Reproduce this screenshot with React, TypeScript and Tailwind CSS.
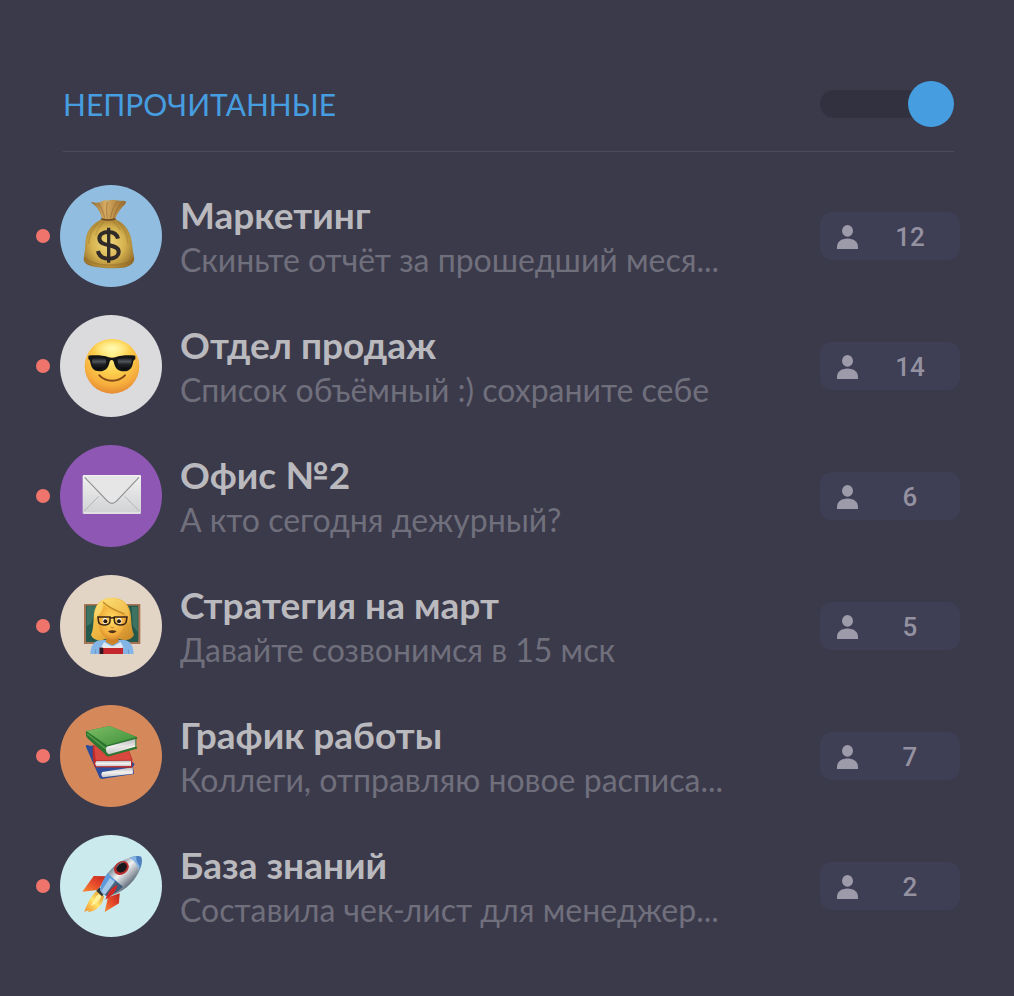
import { useState } from "react";
import type { ReactNode } from "react";

function MoneyBag() {
  return (
    <svg viewBox="90 27 306 306" className="size-full" aria-hidden="true">
      <defs>
        <radialGradient id="bag" cx="0.48" cy="0.5" r="0.6">
          <stop offset="0" stopColor="#efd87c" />
          <stop offset="0.55" stopColor="#d6b350" />
          <stop offset="1" stopColor="#946c28" />
        </radialGradient>
        <linearGradient id="bagNeck" x1="0" x2="1" y1="0" y2="0">
          <stop offset="0" stopColor="#8f6a35" />
          <stop offset="0.4" stopColor="#d5ab62" />
          <stop offset="0.7" stopColor="#b98c45" />
          <stop offset="1" stopColor="#94692d" />
        </linearGradient>
      </defs>
      <path d="M187 78c10 4 18 1 27-1 6-4 13-5 20-3 8-4 17-3 24-1 9 2 17 1 26 2 5 1 5 4 2 8-14 15-27 31-31 48h-39c-3-20-14-39-30-49-3-2-2-5 1-4z" fill="url(#bagNeck)" />
      <path d="M205 82c10 14 17 30 19 46M232 78c-3 17-3 34 0 50M262 76c-13 17-18 34-20 52M276 79c-15 17-22 32-26 50" fill="none" stroke="#7d5727" strokeWidth="3" opacity="0.45" />
      <path d="M216 130h40c20 8 38 25 46 52 5 19 5 38 10 60 5 22-16 32-42 34-23 2-49 1-73-3-23-3-41-12-35-32 5-21 2-41 7-60 7-25 25-42 47-51z" fill="url(#bag)" />
      <path d="M206 142c-18 12-28 31-30 62M222 137c-13 12-22 26-25 42M264 138c18 17 28 38 30 65M248 136c12 8 19 17 23 27" fill="none" stroke="#8f6a26" strokeWidth="4" opacity="0.3" />
      <path d="M165 245c14 17 39 21 72 22 32 0 60-4 74-20" fill="none" stroke="#86611f" strokeWidth="5" opacity="0.35" />
      <path d="M215 129c13 4 27 4 40 0" fill="none" stroke="#68451d" strokeWidth="5" strokeLinecap="round" />
      <path d="M264 188c-3-13-14-20-29-20-17 0-27 8-27 19 0 29 58 13 58 40 0 13-12 21-30 21-18 0-29-8-32-23" fill="none" stroke="#302a28" strokeWidth="12" />
      <path d="M236 155v105" fill="none" stroke="#302a28" strokeWidth="10" />
    </svg>
  );
}

function CoolFace() {
  return (
    <svg viewBox="90 27 306 306" className="size-full" aria-hidden="true">
      <defs>
        <radialGradient id="face" cx="0.5" cy="0.3" r="0.7">
          <stop offset="0" stopColor="#fff28a" />
          <stop offset="0.45" stopColor="#fdd04d" />
          <stop offset="0.8" stopColor="#f5ac3c" />
          <stop offset="1" stopColor="#e58a33" />
        </radialGradient>
        <radialGradient id="shine">
          <stop offset="0" stopColor="#fff9b0" />
          <stop offset="1" stopColor="#fff9b0" stopOpacity="0" />
        </radialGradient>
        <linearGradient id="lens" x1="0" x2="0" y1="0" y2="1">
          <stop offset="0" stopColor="#1d1f22" />
          <stop offset="0.3" stopColor="#50555a" />
          <stop offset="0.55" stopColor="#202326" />
          <stop offset="1" stopColor="#070707" />
        </linearGradient>
      </defs>
      <circle cx="246" cy="181" r="82" fill="url(#face)" />
      <ellipse cx="246" cy="126" rx="58" ry="26" fill="url(#shine)" />
      <path d="M175 149c22-2 46-1 61 5 7 2 13 2 20 0 16-6 38-7 60-5v11c-5 2-6 5-7 10-3 18-12 26-28 26-17 0-25-9-29-25-1-6-3-9-7-9s-6 3-7 9c-4 16-12 25-30 25-16 0-24-9-27-27-1-5-2-8-6-9z" fill="#141516" />
      <path d="M186 158c14-3 30-2 42 2 2 17-5 31-22 31-15 0-20-14-20-33zM263 160c13-4 28-5 42-2 0 20-6 33-22 33-15 0-20-13-20-31z" fill="url(#lens)" />
      <path d="M208 208c20 21 56 22 77 0" fill="none" stroke="#814817" strokeWidth="6" strokeLinecap="round" />
    </svg>
  );
}

function Envelope() {
  return (
    <svg viewBox="90 27 306 306" className="size-full" aria-hidden="true">
      <defs>
        <linearGradient id="paper" x1="0" x2="0" y1="0" y2="1">
          <stop offset="0" stopColor="#f1f1f2" />
          <stop offset="1" stopColor="#d0d1d2" />
        </linearGradient>
      </defs>
      <rect x="158" y="117" width="175" height="117" rx="4" fill="url(#paper)" />
      <path d="M163 225l43-44M328 225l-44-44" stroke="#b2b3b4" strokeWidth="3" fill="none" />
      <path d="M163 121l68 72c10 12 20 12 30 0l67-72z" fill="#e6e6e7" />
      <path d="M164 124l67 70c10 11 20 11 30 0l66-70" fill="none" stroke="#8f9193" strokeWidth="3.5" />
      <path d="M161 231h169" stroke="#f0f0f1" strokeWidth="3" />
    </svg>
  );
}

function Teacher() {
  return (
    <svg viewBox="90 27 306 306" className="size-full" aria-hidden="true">
      <defs>
        <linearGradient id="hair" x1="0" x2="1" y1="0" y2="1">
          <stop offset="0" stopColor="#f9d05a" />
          <stop offset="0.5" stopColor="#eeb640" />
          <stop offset="1" stopColor="#c68428" />
        </linearGradient>
        <linearGradient id="fringe" x1="0" x2="1" y1="0" y2="1">
          <stop offset="0" stopColor="#ffe37a" />
          <stop offset="1" stopColor="#eab03d" />
        </linearGradient>
        <radialGradient id="skin" cx="0.5" cy="0.4" r="0.65">
          <stop offset="0" stopColor="#ffdc62" />
          <stop offset="0.7" stopColor="#f2ae3c" />
          <stop offset="1" stopColor="#d08027" />
        </radialGradient>
      </defs>
      <rect x="162" y="114" width="169" height="120" fill="#a67455" />
      <rect x="168" y="119" width="157" height="109" fill="#24594b" />
      <path d="M170 121h30l-17 52-13 8zM305 123h18v76l-15-22z" fill="#3d7360" />
      <path d="M181 264c1-24 10-39 29-42h73c19 3 27 18 28 42z" fill="#83b5e6" />
      <path d="M183 207c7-15 7-34 8-54 1-35 20-58 54-58 35 0 56 21 58 57 1 22 2 36 9 55-9 17-29 18-44 12h-42c-16 8-36 5-43-12z" fill="url(#hair)" />
      <path d="M228 204h38v24l-19 10-19-10z" fill="#cf8329" />
      <path d="M222 228l25 14 25-14 9 17h-68z" fill="#dce9f5" />
      <path d="M207 148c7-7 12-16 15-29 17 15 37 23 62 26 6 37-8 76-38 76-29 0-45-35-39-73z" fill="url(#skin)" />
      <path d="M219 108c22 21 42 27 64 35 10 5 12 20 14 34 6-38-5-79-51-81-30 0-53 19-52 61 15-8 25-25 25-49z" fill="url(#fringe)" />
      <path d="M219 108c22 21 42 27 64 35" fill="none" stroke="#c28a29" strokeWidth="4" />
      <ellipse cx="225" cy="165" rx="7" ry="9" fill="#fff" />
      <ellipse cx="268" cy="165" rx="7" ry="9" fill="#fff" />
      <circle cx="226" cy="166" r="6" fill="#2c1c13" />
      <circle cx="267" cy="166" r="6" fill="#2c1c13" />
      <path d="M204 153h36v12c0 10-7 12-18 12-12 0-17-5-17-14zM253 153h38l-2 12c-1 10-7 12-18 12-12 0-18-5-18-14zM240 157c5-2 9-2 13 0" fill="none" stroke="#3b2517" strokeWidth="4.5" />
      <path d="M242 183c3 3 7 3 10 0" fill="none" stroke="#bb7324" strokeWidth="3" />
      <path d="M234 196c7-4 19-4 26 0-7 8-19 8-26 0z" fill="#56321b" />
      <path d="M209 245h70v19h-70z" fill="#c4272d" />
      <path d="M209 245h11v19h-11z" fill="#301722" />
      <path d="M218 241h56l4 5h-59z" fill="#ece6e5" />
      <path d="M197 249l-1 15M295 249l1 15" stroke="#5e8fc2" strokeWidth="2" />
    </svg>
  );
}

function Books() {
  return (
    <svg viewBox="90 27 306 306" className="size-full" aria-hidden="true">
      <defs>
        <linearGradient id="greenCover" x1="0" x2="1" y1="0" y2="1">
          <stop offset="0" stopColor="#7dbd66" />
          <stop offset="1" stopColor="#3f9139" />
        </linearGradient>
        <linearGradient id="pages" x1="0" x2="0" y1="0" y2="1">
          <stop offset="0" stopColor="#b9b8bc" />
          <stop offset="0.5" stopColor="#f4f2f1" />
          <stop offset="1" stopColor="#c5c3c5" />
        </linearGradient>
      </defs>
      <path d="M167 151q1-5 8-4l35 60 94-11 10 8-5 9 3 21-97 15-6-3z" fill="#2e4c98" />
      <path d="M217 228l91-14 1 19-91 11c-5-6-5-11-1-16z" fill="url(#pages)" />
      <path d="M169 149l22 0 2 62 16 19z" fill="#2e4c98" />
      <path d="M189 146l106 13 12 31-1 25-111-1c-8-19-8-45-6-68z" fill="#ba2b29" />
      <path d="M192 147l102 13 11 31-108 2z" fill="#d9483e" />
      <path d="M199 195l104-1v16l-104 1c-4-6-4-11 0-16z" fill="url(#pages)" />
      <path d="M169 105l70-15 81 33c3 2 2 5-1 7v22c3 2 4 5 1 6l-82 23c-6 2-11-2-13-7l-51-46c-7-6-8-17-5-23z" fill="#2b7531" />
      <path d="M169 105l70-15 81 33-89 25z" fill="url(#greenCover)" />
      <path d="M171 113l57 46" stroke="#5aa34b" strokeWidth="4" />
      <path d="M230 152l86-23v23l-79 23c-9-5-11-15-7-23z" fill="url(#pages)" />
      <path d="M234 160l81-22M235 167l80-22" stroke="#c6c4c5" strokeWidth="1.5" />
    </svg>
  );
}

function Rocket() {
  return (
    <svg viewBox="90 27 306 306" className="size-full" aria-hidden="true">
      <defs>
        <linearGradient id="hull" x1="0.3" x2="0.75" y1="0.3" y2="0.75">
          <stop offset="0" stopColor="#7e8f9f" />
          <stop offset="0.35" stopColor="#f0f1f2" />
          <stop offset="0.6" stopColor="#b2b8bf" />
          <stop offset="1" stopColor="#475666" />
        </linearGradient>
        <linearGradient id="fin" x1="1" x2="0" y1="0" y2="1">
          <stop offset="0" stopColor="#bd2420" />
          <stop offset="0.5" stopColor="#e6492a" />
          <stop offset="1" stopColor="#f58b32" />
        </linearGradient>
        <linearGradient id="flame" x1="1" x2="0" y1="0" y2="1">
          <stop offset="0" stopColor="#d98122" />
          <stop offset="0.5" stopColor="#ffe56b" />
          <stop offset="1" stopColor="#f08a27" />
        </linearGradient>
      </defs>
      <path d="M235 151l-44-1-34 47 45-5z" fill="url(#fin)" />
      <path d="M269 202l-35 12-10 44 43-26z" fill="url(#fin)" />
      <path d="M202 193c-17 15-31 40-39 65l13-6-1 7c20-5 42-14 47-48z" fill="url(#flame)" />
      <path d="M205 204c-9 10-15 22-22 35 16-6 26-15 31-30z" fill="#fff29b" />
      <path d="M199 194l10-10 17 14-10 13z" fill="#29343c" />
      <path d="M210 190c11-44 45-82 89-95 15-6 29-6 35-2 4 9 1 26-6 41-17 38-52 67-95 78-14-5-20-12-23-22z" fill="url(#hull)" />
      <path d="M299 95c16-6 29-6 35-2 4 10 1 24-5 38-6-19-16-28-30-36z" fill="#4c7fc0" />
      <path d="M299 95c9-3 15-4 20-4-2 9 2 19 10 30l-2 11c-7-20-16-30-28-37z" fill="#86b5e3" />
      <path d="M233 141l45 41c-16 14-31 24-47 29-10-4-17-11-21-21 4-17 12-33 23-49z" fill="#5f9ada" />
      <path d="M240 156l20 16-35 35-11-12z" fill="#a4c8e8" />
      <path d="M256 164l23 18c-14 14-30 23-46 30l-8-6z" fill="#34455b" opacity="0.75" />
      <path d="M263 176c-20 10-31 24-37 45 15-9 32-21 37-45z" fill="#cf2924" />
      <ellipse cx="274" cy="126" rx="24" ry="19" transform="rotate(-37 274 126)" fill="#b82c2b" />
      <ellipse cx="275" cy="125" rx="17" ry="13" transform="rotate(-37 275 125)" fill="#17191c" />
      <path d="M260 124c4-9 12-14 20-15" fill="none" stroke="#6b747d" strokeWidth="3" />
    </svg>
  );
}

function PersonIcon() {
  return (
    <svg viewBox="0 0 21 24" className="h-6 w-[21px] fill-[#9d9ba9]" aria-hidden="true">
      <ellipse cx="10.5" cy="5.9" rx="5.5" ry="5.9" />
      <path d="M0 24v-2c0-5 4-8.500 10.500-8.500S21 17 21 22v2z" />
    </svg>
  );
}

type Chat = {
  title: string;
  message: string;
  members: number;
  avatarClass: string;
  picture: ReactNode;
};

const chats: Chat[] = [
  { title: "Маркетинг", message: "Скиньте отчёт за прошедший меся...", members: 12, avatarClass: "bg-[#90bde0]", picture: <MoneyBag /> },
  { title: "Отдел продаж", message: "Список объёмный :) сохраните себе", members: 14, avatarClass: "bg-[#dbdbde]", picture: <CoolFace /> },
  { title: "Офис №2", message: "А кто сегодня дежурный?", members: 6, avatarClass: "bg-[#8e57b4]", picture: <Envelope /> },
  { title: "Стратегия на март", message: "Давайте созвонимся в 15 мск", members: 5, avatarClass: "bg-[#e3d5c5]", picture: <Teacher /> },
  { title: "График работы", message: "Коллеги, отправляю новое расписа...", members: 7, avatarClass: "bg-[#d5895b]", picture: <Books /> },
  { title: "База знаний", message: "Составила чек-лист для менеджер...", members: 2, avatarClass: "bg-[#cbeaed]", picture: <Rocket /> },
];

function ChatRow({ chat }: { chat: Chat }) {
  return (
    <li>
      <a href="#" className="flex items-center">
        <span className="size-3.5 shrink-0 rounded-full bg-[#ef756c]" />
        <span className={`ml-2.5 size-[102px] shrink-0 overflow-hidden rounded-full ${chat.avatarClass}`}>
          {chat.picture}
        </span>
        <span className="ml-[18px] flex min-w-0 flex-1 flex-col">
          <span className="truncate text-[37px] leading-[48px] font-bold text-[#b9b9be]">{chat.title}</span>
          <span className="truncate text-[32px] leading-[42px] text-[#706f7c]">{chat.message}</span>
        </span>
        <span className="ml-5 flex h-12 w-[140px] shrink-0 items-center rounded-xl bg-[#3e3e55] pt-0.5 pl-[17px]">
          <PersonIcon />
          <span className="ml-7 w-12 text-center font-[Roboto,sans-serif] text-[26px] leading-8 font-medium text-[#9491a0]">
            {chat.members}
          </span>
        </span>
      </a>
    </li>
  );
}

export default function App() {
  const [unreadOnly, setUnreadOnly] = useState(true);

  return (
    <main className="min-h-screen bg-[#3b3a4b] pt-[81px] pb-[59px] font-[Lato,sans-serif]">
      <header className="mr-[60px] ml-[63px] border-b border-[#4d4b5a] pb-6">
        <label className="flex cursor-pointer items-center justify-between">
          <span className="text-[30px] leading-[46px] text-[#469ee0]">НЕПРОЧИТАННЫЕ</span>
          <span className="relative flex h-[46px] w-[134px] items-center">
            <input
              type="checkbox"
              role="switch"
              checked={unreadOnly}
              onChange={(event) => setUnreadOnly(event.target.checked)}
              className="peer h-7 w-full cursor-pointer appearance-none rounded-full bg-[#32313f]"
            />
            <span className="pointer-events-none absolute left-0 size-[46px] rounded-full bg-[#777584] peer-checked:right-0 peer-checked:left-auto peer-checked:bg-[#469ee0]" />
          </span>
        </label>
      </header>
      <ul className="mt-[33px] mr-[54px] ml-9 flex flex-col gap-7">
        {chats.map((chat) => (
          <ChatRow key={chat.title} chat={chat} />
        ))}
      </ul>
    </main>
  );
}
